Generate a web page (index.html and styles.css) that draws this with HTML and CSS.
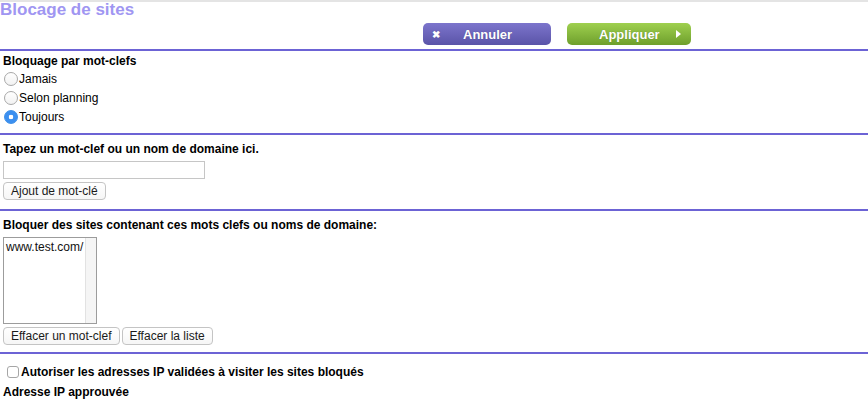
FILE: index.html
```html
<!DOCTYPE html>
<html lang="fr">
<head>
<meta charset="utf-8">
<title>Blocage de sites</title>
<link rel="stylesheet" href="styles.css">
</head>
<body>
<div class="page">
  <header class="header">
    <h1 class="title">Blocage de sites</h1>
    <div class="actions">
      <button class="action action-cancel" type="button"><span class="x">&#x2716;</span><span class="action-label">Annuler</span></button>
      <button class="action action-apply" type="button"><span class="action-label">Appliquer</span><span class="tri"></span></button>
    </div>
  </header>
  <div class="rule"></div>

  <section class="sec sec-mode">
    <div class="heading">Bloquage par mot-clefs</div>
    <label class="opt"><input type="radio" name="mode" class="radio"><span>Jamais</span></label>
    <label class="opt"><input type="radio" name="mode" class="radio"><span>Selon planning</span></label>
    <label class="opt"><input type="radio" name="mode" class="radio" checked><span>Toujours</span></label>
  </section>
  <div class="rule"></div>

  <section class="sec sec-add">
    <div class="heading">Tapez un mot-clef ou un nom de domaine ici.</div>
    <input type="text" class="field">
    <div class="btnrow"><button type="button" class="btn">Ajout de mot-clé</button></div>
  </section>
  <div class="rule"></div>

  <section class="sec sec-list">
    <div class="heading">Bloquer des sites contenant ces mots clefs ou noms de domaine:</div>
    <div class="listbox">
      <div class="listbox-items">www.test.com/</div>
      <div class="listbox-track"></div>
    </div>
    <div class="btnrow btnrow-2">
      <button type="button" class="btn">Effacer un mot-clef</button>
      <button type="button" class="btn">Effacer la liste</button>
    </div>
  </section>
  <div class="rule"></div>

  <section class="sec sec-allow">
    <label class="opt opt-check"><input type="checkbox" class="check"><span class="heading-inline">Autoriser les adresses IP validées à visiter les sites bloqués</span></label>
    <div class="heading heading-ip">Adresse IP approuvée</div>
  </section>
</div>
</body>
</html>
```

FILE: styles.css
```css
html, body {
  margin: 0;
  padding: 0;
  background: #ffffff;
}
body {
  font-family: "Liberation Sans", Arial, Helvetica, sans-serif;
  font-size: 12px;
  color: #000;
  overflow: hidden;
}
.page {
  border-top: 2px solid #e4e4e4;
  width: 868px;
  height: 407px;
}
.header {
  display: flex;
  flex-direction: column;
}
.title {
  margin: 0;
  padding-top: 1px;
  font-size: 17px;
  line-height: 14px;
  font-weight: bold;
  color: #a096f2;
}
.actions {
  display: flex;
  gap: 16px;
  margin: 6px 0 4px 423px;
}
.action {
  position: relative;
  height: 22px;
  border: 0;
  border-radius: 5px;
  padding: 0;
  color: #fff;
  font-family: "Liberation Sans", Arial, Helvetica, sans-serif;
  font-weight: bold;
  font-size: 13px;
  display: flex;
  align-items: center;
  text-shadow: 0 0 1px rgba(0,0,0,0.25);
}
.action-cancel {
  width: 128px;
  background: linear-gradient(#7c75cc, #5a54a8);
}
.action-apply {
  width: 124px;
  background: linear-gradient(#9fd04f, #6e9f2c);
}
.x {
  font-size: 10px;
  width: 14px;
  margin-left: 6px;
  text-align: center;
}
.action-cancel .action-label {
  margin-left: 20px;
}
.action-apply .action-label {
  margin-left: 32px;
}
.tri {
  width: 0;
  height: 0;
  border-left: 5px solid #fff;
  border-top: 4px solid transparent;
  border-bottom: 4px solid transparent;
  margin-left: 16px;
}
.rule {
  height: 2px;
  background: #6c63d5;
}
.sec {
  padding-left: 3px;
  display: flex;
  flex-direction: column;
  align-items: flex-start;
}
.heading {
  font-weight: bold;
  line-height: 15px;
}
.sec-mode {
  padding-top: 3px;
  padding-bottom: 7px;
}
.opt {
  display: flex;
  align-items: center;
  height: 19px;
}
.radio {
  appearance: none;
  -webkit-appearance: none;
  width: 14px;
  height: 14px;
  margin: 0 1px 0 1px;
  border: 1px solid #a8a8a8;
  border-radius: 50%;
  background: linear-gradient(#ffffff, #f2f2f2);
  box-sizing: border-box;
}
.radio:checked {
  border-color: #3d8fe8;
  background: radial-gradient(circle, #ffffff 0 2px, #3b8ff0 2.6px);
}
.sec-add {
  padding-top: 7px;
  padding-bottom: 9px;
}
.field {
  width: 202px;
  height: 18px;
  box-sizing: border-box;
  margin: 4px 0 0 0;
  border: 1px solid #c6c6c6;
  padding: 0 2px;
}
.btnrow {
  display: flex;
  gap: 2px;
  margin-top: 3px;
}
.btn {
  height: 18px;
  box-sizing: border-box;
  padding: 0 7px;
  margin: 0;
  border: 1px solid #c4c4c4;
  border-radius: 4px;
  background: linear-gradient(#ffffff, #f6f6f6);
  font-family: "Liberation Sans", Arial, Helvetica, sans-serif;
  font-size: 12px;
  color: #1a1a1a;
  line-height: 16px;
}
.sec-list {
  padding-top: 7px;
  padding-bottom: 7px;
}
.listbox {
  display: flex;
  width: 94px;
  height: 87px;
  box-sizing: border-box;
  border: 1px solid #9c9c9c;
  margin-top: 4px;
}
.listbox-items {
  flex: 1;
  padding: 2px 0 0 2px;
  line-height: 14px;
  color: #111;
}
.listbox-track {
  width: 10px;
  background: #f5f5f5;
  border-left: 1px solid #e2e2e2;
}
.btnrow-2 {
  margin-top: 3px;
}
.sec-allow {
  padding-top: 10px;
}
.opt-check {
  height: 15px;
}
.check {
  appearance: none;
  -webkit-appearance: none;
  width: 12px;
  height: 12px;
  margin: 0 2px 0 4px;
  border: 1px solid #a6a6a6;
  border-radius: 3px;
  background: #fff;
  box-sizing: border-box;
}
.heading-inline {
  font-weight: bold;
}
.heading-ip {
  margin-top: 6px;
}
```
